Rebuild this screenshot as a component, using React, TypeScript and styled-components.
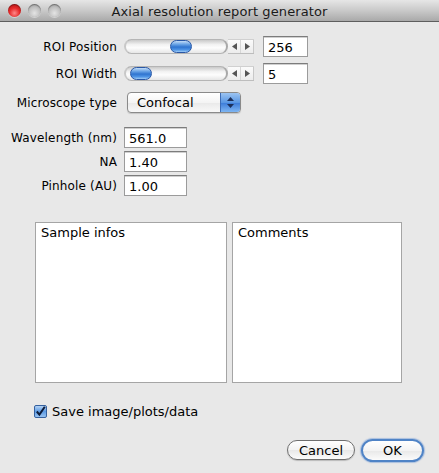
import React from "react";
import styled, { createGlobalStyle } from "styled-components";

const Global = createGlobalStyle`
  html, body { margin: 0; padding: 0; background: #e8e8e8; }
  * { box-sizing: border-box; }
`;

const Window = styled.div`
  width: 439px;
  height: 473px;
  background: #e8e8e8;
  font-family: "DejaVu Sans", "Liberation Sans", sans-serif;
  font-size: 12px;
  color: #000;
  display: flex;
  flex-direction: column;
  overflow: hidden;
`;

const TitleBar = styled.div`
  height: 22px;
  flex: none;
  position: relative;
  display: flex;
  align-items: center;
  justify-content: center;
  background: linear-gradient(#e6e6e6, #c9c9c9 50%, #a9a9a9);
  border-bottom: 1px solid #5e5e5e;
`;

const Lights = styled.div`
  position: absolute;
  left: 8px;
  top: 4px;
  display: flex;
  gap: 7px;
`;

const Light = styled.div<{ $red?: boolean }>`
  width: 13px;
  height: 13px;
  border-radius: 50%;
  background: ${(p) =>
    p.$red
      ? "radial-gradient(circle at 50% 70%, #ff8a8a 0%, #e62a2a 45%, #a50d0d 100%)"
      : "radial-gradient(circle at 50% 70%, #e4e4e4 0%, #bdbdbd 55%, #8f8f8f 100%)"};
  box-shadow: inset 0 1px 1px rgba(0, 0, 0, 0.35), 0 1px 0 rgba(255, 255, 255, 0.4);
`;

const Title = styled.div`
  font-size: 13px;
  color: #1a1a1a;
  letter-spacing: 0.1px;
  padding-top: 1px;
`;

const Body = styled.div`
  flex: 1;
  display: flex;
  flex-direction: column;
  padding-top: 14px;
`;

const FieldRow = styled.div<{ $gap?: number; $mb?: number }>`
  display: flex;
  align-items: center;
  gap: ${(p) => p.$gap ?? 7}px;
  margin-bottom: ${(p) => p.$mb ?? 0}px;
`;

const Label = styled.div`
  width: 117px;
  text-align: right;
  white-space: nowrap;
  letter-spacing: 0.15px;
`;

const Input = styled.div<{ $w: number; $ml?: number }>`
  width: ${(p) => p.$w}px;
  height: 21px;
  margin-left: ${(p) => p.$ml ?? 0}px;
  background: #fff;
  border: 1px solid #9b9b9b;
  border-top-color: #7c7c7c;
  box-shadow: inset 0 1px 0 #d0d0d0;
  padding: 3px 0 0 4px;
  font-size: 13px;
  line-height: 15px;
`;

const ScrollBar = styled.div`
  display: flex;
  align-items: center;
  height: 15px;
  width: 130px;
`;

const Track = styled.div`
  position: relative;
  width: 104px;
  height: 15px;
  border-radius: 8px;
  background: linear-gradient(#c9c9c9, #f2f2f2 35%, #fdfdfd 60%, #e6e6e6);
  border: 1px solid #b5b5b5;
  border-left: 2px solid #c8c8c8;
  border-right: 2px solid #a9a9a9;
`;

const Thumb = styled.div`
  position: absolute;
  top: 0px;
  width: 22px;
  height: 13px;
  border-radius: 7px;
  background: linear-gradient(#c3dcf7 0%, #6aa4e6 30%, #2f74d0 55%, #4f95e6 80%, #9fcbf5 100%);
  border: 1px solid #2a58a6;
`;

const Arrows = styled.div`
  display: flex;
  height: 15px;
  border-top: 1px solid #d0d0d0;
  border-bottom: 1px solid #bdbdbd;
  background: linear-gradient(#fbfbfb, #ececec);
`;

const ArrowBtn = styled.div<{ $first?: boolean }>`
  width: 13px;
  display: flex;
  align-items: center;
  justify-content: center;
  border-right: 1px solid ${(p) => (p.$first ? "#d6d6d6" : "#c8c8c8")};
`;

const PopUp = styled.div`
  width: 114px;
  height: 21px;
  border: 1px solid #8a8a8a;
  border-radius: 4px;
  display: flex;
  overflow: hidden;
  background: linear-gradient(#ffffff, #f4f4f4 50%, #e9e9e9 51%, #f8f8f8);
  box-shadow: 0 1px 1px rgba(0, 0, 0, 0.15);
`;

const PopText = styled.div`
  flex: 1;
  padding: 2px 0 0 9px;
  font-size: 13px;
`;

const PopArrows = styled.div`
  width: 20px;
  display: flex;
  align-items: center;
  justify-content: center;
  border-left: 1px solid #3d6cb5;
  background: linear-gradient(#9cc4f2, #5a97e3 50%, #3a7ad8 51%, #7fb6f3);
`;

const Areas = styled.div`
  display: flex;
  gap: 5px;
  padding-left: 35px;
  margin-top: 26px;
`;

const TextArea = styled.div<{ $w: number }>`
  width: ${(p) => p.$w}px;
  height: 161px;
  background: #fff;
  border: 1px solid #a5a5a5;
  padding: 2px 0 0 5px;
  font-size: 13px;
`;

const CheckRow = styled.div`
  display: flex;
  align-items: center;
  gap: 5px;
  padding-left: 34px;
  margin-top: 21px;
  font-size: 13px;
`;

const Buttons = styled.div`
  display: flex;
  justify-content: flex-end;
  gap: 6px;
  padding-right: 15px;
  margin-top: 21px;
`;

const Button = styled.div<{ $default?: boolean; $w: number }>`
  width: ${(p) => p.$w}px;
  height: ${(p) => (p.$default ? 23 : 20)}px;
  margin-top: ${(p) => (p.$default ? -1 : 0)}px;
  border-radius: 12px;
  display: flex;
  align-items: center;
  justify-content: center;
  font-size: 13px;
  background: linear-gradient(#ffffff, #f3f3f3 50%, #e8e8e8 51%, #fbfbfb);
  border: ${(p) => (p.$default ? "2px solid #4f83c6" : "1px solid #6f6f6f")};
  box-shadow: ${(p) =>
    p.$default ? "0 0 1px 1px rgba(90,140,210,0.45)" : "0 1px 1px rgba(0,0,0,0.2)"};
`;

function Slider({ pos }: { pos: number }) {
  return (
    <ScrollBar>
      <Track>
        <Thumb style={{ left: pos }} />
      </Track>
      <Arrows>
        <ArrowBtn $first>
          <svg width="5" height="7" viewBox="0 0 5 7">
            <path d="M5 0 L0 3.5 L5 7 Z" fill="#555" />
          </svg>
        </ArrowBtn>
        <ArrowBtn>
          <svg width="5" height="7" viewBox="0 0 5 7">
            <path d="M0 0 L5 3.5 L0 7 Z" fill="#555" />
          </svg>
        </ArrowBtn>
      </Arrows>
    </ScrollBar>
  );
}

export default function App() {
  return (
    <>
      <Global />
      <Window>
        <TitleBar>
          <Lights>
            <Light $red />
            <Light />
            <Light />
          </Lights>
          <Title>Axial resolution report generator</Title>
        </TitleBar>
        <Body>
          <FieldRow $mb={6}>
            <Label>ROI Position</Label>
            <Slider pos={44} />
            <Input $w={45} $ml={2}>256</Input>
          </FieldRow>
          <FieldRow $mb={8}>
            <Label>ROI Width</Label>
            <Slider pos={4} />
            <Input $w={45} $ml={2}>5</Input>
          </FieldRow>
          <FieldRow $gap={10} $mb={14}>
            <Label>Microscope type</Label>
            <PopUp>
              <PopText>Confocal</PopText>
              <PopArrows>
                <svg width="7" height="11" viewBox="0 0 7 11">
                  <path d="M3.5 0 L7 4 L0 4 Z M0 7 L7 7 L3.5 11 Z" fill="#1c2f5a" />
                </svg>
              </PopArrows>
            </PopUp>
          </FieldRow>
          <FieldRow $mb={3}>
            <Label>Wavelength (nm)</Label>
            <Input $w={63}>561.0</Input>
          </FieldRow>
          <FieldRow $mb={3}>
            <Label>NA</Label>
            <Input $w={63}>1.40</Input>
          </FieldRow>
          <FieldRow>
            <Label>Pinhole (AU)</Label>
            <Input $w={63}>1.00</Input>
          </FieldRow>
          <Areas>
            <TextArea $w={192}>Sample infos</TextArea>
            <TextArea $w={170}>Comments</TextArea>
          </Areas>
          <CheckRow>
            <svg width="13" height="13" viewBox="0 0 13 13">
              <defs>
                <linearGradient id="cb" x1="0" y1="0" x2="0" y2="1">
                  <stop offset="0" stopColor="#bcd8f6" />
                  <stop offset="0.5" stopColor="#5c9ae3" />
                  <stop offset="1" stopColor="#9cc6f2" />
                </linearGradient>
              </defs>
              <rect x="0.5" y="0.5" width="12" height="12" rx="1.5" fill="url(#cb)" stroke="#35609e" />
              <path d="M2.8 6.5 L5.4 9.6 L10.8 1.8" fill="none" stroke="#0d1c3a" strokeWidth="2" />
            </svg>
            <span>Save image/plots/data</span>
          </CheckRow>
          <Buttons>
            <Button $w={68}>Cancel</Button>
            <Button $default $w={63}>OK</Button>
          </Buttons>
        </Body>
      </Window>
    </>
  );
}
